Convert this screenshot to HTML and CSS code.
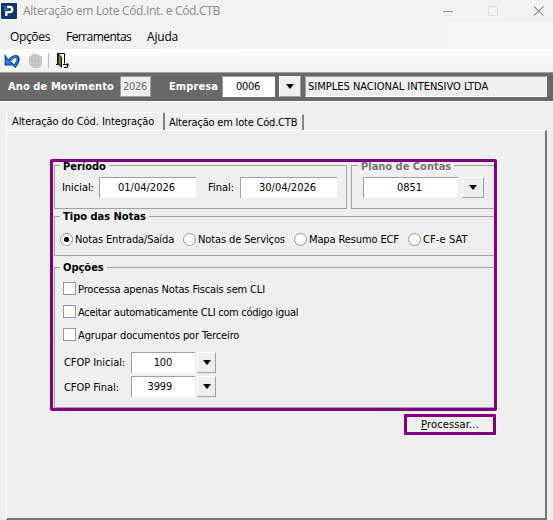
FILE: index.html
```html
<!DOCTYPE html>
<html lang="pt-BR">
<head>
<meta charset="utf-8">
<title>Alteração em Lote Cód.Int. e Cód.CTB</title>
<link rel="stylesheet" href="styles.css">
</head>
<body>
<div class="window">
  <header class="titlebar">
    <svg class="logo" width="16" height="16" viewBox="0 0 16 16"><rect width="16" height="16" rx="1" fill="#0d3767"/><path d="M5.3 13V9.2H8.6A2.7 2.7 0 0 0 8.6 3.8H6" fill="none" stroke="#fff" stroke-width="2.3"/><path d="M4.2 9.3V6.2H7.8M3 3L5 4.5" fill="none" stroke="#2e9bd6" stroke-width="1.2"/></svg>
    <h1 class="title">Alteração em Lote Cód.Int. e Cód.CTB</h1>
    <svg class="controls" width="102" height="12" viewBox="0 0 102 12"><path d="M0 6.5H10" stroke="#8e8e8e"/><rect x="45.5" y="1.5" width="9" height="9" rx="1" fill="none" stroke="#dedede"/><path d="M91 1.3L100.5 10.7M100.5 1.3L91 10.7" stroke="#8c8c8c" stroke-width="1.1"/></svg>
  </header>
  <nav class="menu"><span class="m-options">Opções</span><span class="m-tools">Ferramentas</span><span class="m-help">Ajuda</span></nav>
  <div class="toolbar">
    <svg class="undo" width="17" height="16" viewBox="0 0 17 16"><path d="M4.5 9.5Q8 3.2 12 3.6Q17 5.4 10.2 14" fill="none" stroke="#0f459c" stroke-width="3.2"/><path d="M1.2 2.8V11.8H9.6L7.6 9.8L5.6 8.6L3.4 6Z" fill="#2a78d0" stroke="#0f459c" stroke-width="1.2"/><path d="M3.5 9.8L6 8.2Q9 3.4 12 3.8Q15.9 5.6 10.5 13" fill="none" stroke="#3587dc" stroke-width="1.3"/></svg>
    <svg class="hand" width="15" height="16" viewBox="0 0 15 16"><path d="M1 4Q1 3 3 3L4 1Q8 0 11 2L14 3.5V11Q13 14 11 15H5Q2 13 1 11Z" fill="#c8c8c8"/><path d="M4 3V10M7 2V10M10 3V10" stroke="#b8b8b8"/></svg>
    <i class="separator"></i>
    <svg class="exit" width="15" height="17" viewBox="0 0 15 17"><path d="M1.5 12V1.5H8.5V11.5" fill="#fff" stroke="#000"/><path d="M2 2L5.5 5V15L2 12Z" fill="#808000" stroke="#000"/><path d="M0 12.5H2M7 12.5H10" stroke="#000"/><path d="M8 15.5H11.5V12" fill="none" stroke="#000080"/><path d="M9.3 13.2L11.5 11L13.7 13.2Z" fill="#000080"/></svg>
  </div>
  <section class="company">
    <b class="year-label">Ano de Movimento</b><span class="field year">2026</span>
    <b class="company-label">Empresa</b><span class="field code">0006</span><button class="drop"></button>
    <span class="field name">SIMPLES NACIONAL INTENSIVO LTDA</span>
  </section>
  <div class="tabs"><span class="tab active"><span class="t-int">Alteração do Cód. Integração</span></span><span class="tab second"><span class="t-ctb">Alteração em lote Cód.CTB</span></span></div>
  <main class="page">
    <div class="form">
      <div class="row">
        <section class="group period"><h2 class="h-period">Período</h2>
          <span class="initial">Inicial:</span><span class="field date">01/04/2026</span>
          <span class="final">Final:</span><span class="field date">30/04/2026</span></section>
        <section class="group plan"><h2 class="h-plan">Plano de Contas</h2><span class="field account">0851</span><button class="drop"></button></section>
      </div>
      <section class="group types"><h2 class="h-types">Tipo das Notas</h2>
        <label class="radio r1"><i class="dot on"></i><span>Notas Entrada/Saída</span></label>
        <label class="radio r2"><i class="dot"></i><span>Notas de Serviços</span></label>
        <label class="radio r3"><i class="dot"></i><span>Mapa Resumo ECF</span></label>
        <label class="radio r4"><i class="dot"></i><span>CF-e SAT</span></label>
      </section>
      <section class="group options"><h2 class="h-options">Opções</h2>
        <label class="check"><i class="box"></i><span class="c1">Processa apenas Notas Fiscais sem CLI</span></label>
        <label class="check"><i class="box"></i><span class="c2">Aceitar automaticamente CLI com código igual</span></label>
        <label class="check"><i class="box"></i><span class="c3">Agrupar documentos por Terceiro</span></label>
        <div class="cfop first"><span class="cfop-label">CFOP Inicial:</span><span class="field number">100</span><button class="drop small"></button></div>
        <div class="cfop last"><span class="cfop-label">CFOP Final:</span><span class="field number">3999</span><button class="drop small"></button></div>
      </section>
    </div>
    <button class="process"><span><u>P</u>rocessar...</span></button>
  </main>
</div>
</body>
</html>
```

FILE: styles.css
```css
* { box-sizing: border-box; }
body { margin: 0; font: 11px/14px "DejaVu Sans Condensed", "DejaVu Sans", sans-serif; font-stretch: condensed; color: #000; background: #efefef; overflow: hidden; }
h1, h2 { margin: 0; }
button { padding: 0; font: inherit; color: #000; }
span, b, h1, h2 { white-space: nowrap; }
.window { width: 553px; height: 520px; background: #efefef; }
.titlebar { display: flex; align-items: center; height: 23px; padding: 0 8px 2px 1px; background: #f2f2f2; }
.title { margin: 1px 0 0 6px; font: 12px/20px "Open Sans", sans-serif; letter-spacing: -.31px; color: #8c8c8c; }
.controls { margin-left: auto; }
.menu { display: flex; height: 26px; padding: 5px 10px 3px; font: 12px/18px "Open Sans", sans-serif; background: linear-gradient(90deg, #f0f0f0, #f7f7f7); }
.m-options { width: 56px; letter-spacing: -.35px; }
.m-tools { width: 81px; letter-spacing: -.55px; }
.m-help { letter-spacing: -.2px; }
.toolbar { display: flex; align-items: center; height: 23px; padding-left: 4px; background: linear-gradient(#fefefe, #efefef); }
.hand { margin-left: 7px; }
.separator { width: 1px; height: 15px; margin: 0 7px 0 5px; background: #bdbdbd; }
.exit { margin-top: -1px; }
.company { display: flex; align-items: center; height: 30px; padding: 0 0 1px 8px; background: #696969; border-top: 1px solid #a0a0a0; border-bottom: 1px solid #fff; color: #fff; }
.company b { flex: none; letter-spacing: .1px; }
.year-label { width: 112px; }
.company-label { width: 53px; margin-left: 18px; }
.field { flex: none; display: block; height: 21px; padding-top: 3px; background: #fff; border: solid #a0a0a0; border-width: 1px 0 0 1px; color: #000; text-align: center; }
.year { width: 31px; padding-right: 1px; background: #efefef; color: #6d6d6d; border: 1px solid #a0a0a0; letter-spacing: -.3px; }
.code { width: 53px; margin-right: 4px; padding-right: 2px; letter-spacing: -.3px; }
.name { width: 242px; margin-left: 4px; padding-left: 2px; background: #efefef; border-right: 1px solid #fff; border-bottom: 1px solid #fff; text-align: left; }
.drop { flex: none; display: grid; place-items: center; width: 22px; height: 21px; background: #efefef; border: 1px solid; border-color: #fff #a0a0a0 #a0a0a0 #fff; }
.drop::before { content: ""; border: solid transparent; border-width: 5px 4.5px 0; border-top-color: #000; }
.drop.small { width: 19px; }
.tabs { display: flex; align-items: flex-end; height: 28px; padding: 0 6px; }
.tab { border-top: 1px solid #fff; }
.active { width: 159px; height: 18px; padding: 2px 0 0 5px; border-left: 1px solid #fff; border-right: 2px solid #808080; border-radius: 3px 2px 0 0; }
.second { width: 139px; height: 16px; padding: 1px 0 0 4px; border-right: 2px solid #888; }
.t-int { letter-spacing: -.08px; }
.t-ctb { letter-spacing: -.2px; }
.page { width: 541px; height: 390px; margin-left: 6px; padding: 28px 0 0 43px; border: solid; border-width: 1px 2px 2px 1px; border-color: #fff #777 #777 #fff; }
.form { width: 447px; height: 252px; padding: 3px 0 0 1px; border: 3px solid purple; border-radius: 2px; }
.row { display: flex; gap: 4px; }
.group { display: flex; border: 1px solid #a0a0a0; position: relative; }
.group h2 { position: absolute; top: -7px; left: 5px; height: 14px; padding: 0 3px; font-size: 11px; line-height: 14px; background: #efefef; }
.group .h-period, .group .h-plan { top: -4px; height: 11px; line-height: 9px; }
.period { width: 293px; height: 44px; padding: 11px 0 0 7px; }
.initial { width: 37px; padding-top: 4px; letter-spacing: -.05px; }
.final { width: 32px; margin-left: 12px; padding-top: 4px; }
.date { width: 97px; padding-right: 3px; }
.plan { width: 143px; height: 44px; padding: 11px 0 0 11px; border-right: 0; }
.plan h2 { left: 6px; color: #777; }
.account { width: 95px; margin-right: 4px; padding-right: 3px; }
.types { height: 40px; margin-top: 7px; padding: 16px 0 0 5px; border-right: 0; }
.radio { display: flex; height: 13px; gap: 2px; line-height: 13px; letter-spacing: -.12px; }
.dot { flex: none; width: 13px; height: 13px; border: 1px solid #999; border-radius: 50%; background: #fff; }
.on { background: radial-gradient(circle, #000 0 2.3px, #fff 2.9px); }
.r1 { width: 123px; }
.r2 { width: 111px; }
.r3 { width: 114px; }
.r4 { letter-spacing: .1px; }
.options { display: block; height: 141px; margin-top: 11px; padding: 14px 0 0 8px; border-right: 0; }
.check { display: flex; height: 13px; margin-bottom: 10px; gap: 2px; line-height: 15px; }
.box { flex: none; width: 13px; height: 13px; background: #fff; border: 1px solid #999; }
.c1 { letter-spacing: -.14px; }
.c2 { letter-spacing: -.27px; }
.c3 { letter-spacing: -.12px; }
.cfop { display: flex; height: 21px; margin-bottom: 3px; }
.cfop.first { margin-top: 11px; }
.cfop-label { width: 68px; padding: 4px 0 0 1px; letter-spacing: -.05px; }
.last .cfop-label { padding-top: 5px; }
.number { width: 64px; margin-right: 2px; padding-right: 23px; text-align: right; letter-spacing: -.2px; }
.process { display: block; width: 92px; height: 21px; margin: 3px 0 0 354px; border: 3px solid purple; border-radius: 1px; background: #efefef; line-height: 14px; letter-spacing: .15px; }
```
